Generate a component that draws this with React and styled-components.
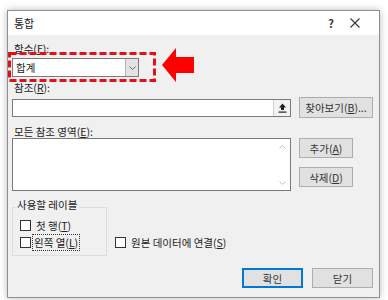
import styled, { createGlobalStyle } from 'styled-components';

const GlobalStyle = createGlobalStyle`
  body {
    margin: 0;
    background: #ffffff;
    font-family: "Noto Sans CJK KR", "Noto Sans", sans-serif;
    color: #222;
  }
`;

const Page = styled.div`
  width: 388px;
  height: 300px;
  padding: 10px 0 0 7px;
  box-sizing: border-box;
  overflow: hidden;
`;

const Dialog = styled.div`
  width: 373px;
  height: 288px;
  box-sizing: border-box;
  background: #f0f0f0;
  border: 1px solid #8f8f8f;
  box-shadow: 0 0 7px rgba(0, 0, 0, 0.28);
  display: flex;
  flex-direction: column;
`;

const TitleBar = styled.div`
  height: 24px;
  background: #ffffff;
  display: flex;
  align-items: center;
  padding-left: 6px;
  font-size: 11px;
`;

const Title = styled.div`
  flex: 1;
`;

const TitleButton = styled.div`
  width: ${(p) => p.$w}px;
  display: flex;
  justify-content: center;
  align-items: center;
  font-size: 11px;
  font-weight: bold;
  color: #333;
`;

const Body = styled.div`
  padding: 0 6px 0 4px;
  display: flex;
  flex-direction: column;
  font-size: 10.5px;
`;

const Label = styled.div`
  padding-left: 2px;
  line-height: 13px;
  margin-top: ${(p) => p.$mt}px;
`;

const Annotated = styled.div`
  position: relative;
  width: 127px;
  margin-top: 3px;
`;

const Combo = styled.div`
  height: 19px;
  box-sizing: border-box;
  background: #fff;
  border: 1px solid #7a7a7a;
  display: flex;
  align-items: center;
  padding-left: 3px;
`;

const ComboText = styled.div`
  flex: 1;
`;

const DropButton = styled.div`
  width: 13px;
  height: 17px;
  box-sizing: border-box;
  background: #e3e3e3;
  border-left: 1px solid #b5b5b5;
  display: flex;
  align-items: center;
  justify-content: center;
`;

const Overlay = styled.svg`
  position: absolute;
  left: ${(p) => p.$x}px;
  top: ${(p) => p.$y}px;
  overflow: visible;
`;

const Row = styled.div`
  display: flex;
  gap: 8px;
  align-items: ${(p) => p.$align || 'flex-start'};
  margin-top: ${(p) => p.$mt || 0}px;
`;

const TextInput = styled.div`
  flex: 1;
  height: 18px;
  box-sizing: border-box;
  background: #fff;
  border: 1px solid #7a7a7a;
  display: flex;
  justify-content: flex-end;
`;

const CollapseButton = styled.div`
  width: 16px;
  height: 16px;
  background: #f3f3f3;
  border-left: 1px solid #cfcfcf;
  display: flex;
  align-items: center;
  justify-content: center;
`;

const Button = styled.div`
  width: ${(p) => p.$w}px;
  height: ${(p) => p.$h || 20}px;
  box-sizing: border-box;
  background: #e1e1e1;
  border: 1px solid ${(p) => (p.$default ? '#0078d7' : '#adadad')};
  box-shadow: ${(p) => (p.$default ? 'inset 0 0 0 1px #0078d7' : 'none')};
  display: flex;
  align-items: center;
  justify-content: center;
  color: #333;
`;

const ListBox = styled.div`
  flex: 1;
  height: 53px;
  box-sizing: border-box;
  background: #fff;
  border: 1px solid #7a7a7a;
  display: flex;
  justify-content: flex-end;
`;

const ScrollTrack = styled.div`
  width: 16px;
  display: flex;
  flex-direction: column;
  justify-content: space-between;
  align-items: center;
  padding: 6px 0 5px;
`;

const ButtonColumn = styled.div`
  width: 74px;
  display: flex;
  flex-direction: column;
  gap: 9px;
`;

const Group = styled.div`
  width: 95px;
  height: 49px;
  box-sizing: border-box;
  border: 1px solid #dcdcdc;
  margin-top: 16px;
  display: flex;
  flex-direction: column;
`;

const GroupTitle = styled.div`
  align-self: flex-start;
  margin: -10px 0 0 2px;
  padding: 0 2px;
  line-height: 13px;
  background: #f0f0f0;
`;

const CheckRow = styled.div`
  height: 17px;
  display: flex;
  align-items: center;
  padding-left: ${(p) => p.$pl || 0}px;
  margin-top: ${(p) => p.$mt || 0}px;
`;

const Box = styled.div`
  width: 11px;
  height: 11px;
  box-sizing: border-box;
  border: 1px solid #333;
  background: #fff;
`;

const CheckText = styled.span`
  margin-left: ${(p) => (p.$focus ? 1 : 3)}px;
  padding: 0 1px;
  line-height: 15px;
  border: 1px dotted ${(p) => (p.$focus ? '#333' : 'transparent')};
`;

const Footer = styled.div`
  display: flex;
  justify-content: flex-end;
  gap: 9px;
  margin-top: 12px;
`;

const Chevron = ({ up }) => (
  <svg width="7" height="4" viewBox="0 0 7 4">
    <path d={up ? 'M0.5 3.5L3.5 0.5L6.5 3.5' : 'M0.5 0.5L3.5 3.5L6.5 0.5'} fill="none" stroke={up ? '#c2c2c2' : '#666'} strokeWidth="1" />
  </svg>
);

const App = () => {
  return (
    <>
      <GlobalStyle />
      <Page>
        <Dialog>
          <TitleBar>
            <Title>통합</Title>
            <TitleButton $w={20}>?</TitleButton>
            <TitleButton $w={28}>
              <svg width="10" height="10" viewBox="0 0 10 10">
                <path d="M0.5 0.5L9.5 9.5M9.5 0.5L0.5 9.5" stroke="#333" strokeWidth="1.1" />
              </svg>
            </TitleButton>
            <div style={{ width: 10 }} />
          </TitleBar>
          <Body>
            <Label $mt={7}>
              함수(<u>F</u>):
            </Label>
            <Annotated>
              <Combo>
                <ComboText>합계</ComboText>
                <DropButton>
                  <Chevron />
                </DropButton>
              </Combo>
              <Overlay $x={-4} $y={-6} width="148" height="30">
                <rect x="1.5" y="1.5" width="145" height="27" fill="none" stroke="#e3101a" strokeWidth="3" strokeDasharray="7 3" />
              </Overlay>
              <Overlay $x={150} $y={-10} width="32" height="34">
                <path d="M0 17L14 0L14 9L32 9L32 25L14 25L14 34Z" fill="#f00" />
              </Overlay>
            </Annotated>
            <Label $mt={4}>
              참조(<u>R</u>):
            </Label>
            <Row $align="center" $mt={3}>
              <TextInput>
                <CollapseButton>
                  <svg width="9" height="10" viewBox="0 0 9 10">
                    <path d="M4.5 0.5L8 4.5L6 4.5L6 7L3 7L3 4.5L1 4.5Z" fill="#222" />
                    <rect x="0.5" y="8.5" width="8" height="1.2" fill="#222" />
                  </svg>
                </CollapseButton>
              </TextInput>
              <Button $w={74} $h={21}>
                찾아보기(<u>B</u>)...
              </Button>
            </Row>
            <Label $mt={7}>
              모든 참조 영역(<u>E</u>):
            </Label>
            <Row>
              <ListBox>
                <ScrollTrack>
                  <Chevron up />
                  <svg width="7" height="4" viewBox="0 0 7 4">
                    <path d="M0.5 0.5L3.5 3.5L6.5 0.5" fill="none" stroke="#c2c2c2" strokeWidth="1" />
                  </svg>
                </ScrollTrack>
              </ListBox>
              <ButtonColumn>
                <Button $w={54}>
                  추가(<u>A</u>)
                </Button>
                <Button $w={54}>
                  삭제(<u>D</u>)
                </Button>
              </ButtonColumn>
            </Row>
            <Row>
              <Group>
                <GroupTitle>사용할 레이블</GroupTitle>
                <CheckRow $pl={7} $mt={6}>
                  <Box />
                  <CheckText>
                    첫 행(<u>T</u>)
                  </CheckText>
                </CheckRow>
                <CheckRow $pl={7}>
                  <Box />
                  <CheckText $focus>
                    왼쪽 열(<u>L</u>)
                  </CheckText>
                </CheckRow>
              </Group>
              <CheckRow $mt={43}>
                <Box />
                <CheckText>
                  원본 데이터에 연결(<u>S</u>)
                </CheckText>
              </CheckRow>
            </Row>
            <Footer>
              <Button $w={61} $default>
                확인
              </Button>
              <Button $w={61}>닫기</Button>
            </Footer>
          </Body>
        </Dialog>
      </Page>
    </>
  );
};

export default App;
